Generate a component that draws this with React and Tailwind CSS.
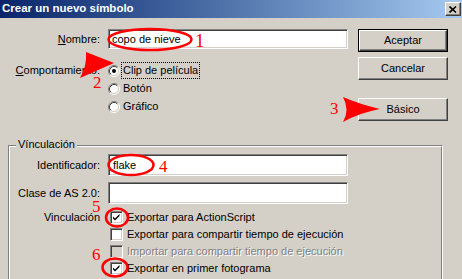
import React from 'react'

const sunken =
  'border border-t-[#808080] border-l-[#808080] border-b-white border-r-white shadow-[inset_1px_1px_0_#404040,inset_-1px_-1px_0_#d4d0c8]'
const raised =
  'border border-t-white border-l-white border-b-[#404040] border-r-[#404040] shadow-[inset_-1px_-1px_0_#808080]'

function Radio({ checked }) {
  return (
    <svg width="12" height="12" viewBox="0 0 12 12" className="shrink-0">
      <circle cx="6" cy="6" r="4.5" fill="#fff" />
      <path d="M9.89 2.11 A5.5 5.5 0 0 0 2.11 9.89" fill="none" stroke="#808080" />
      <path d="M2.11 9.89 A5.5 5.5 0 0 0 9.89 2.11" fill="none" stroke="#fff" />
      <path d="M9.18 2.82 A4.5 4.5 0 0 0 2.82 9.18" fill="none" stroke="#404040" />
      <path d="M2.82 9.18 A4.5 4.5 0 0 0 9.18 2.82" fill="none" stroke="#d4d0c8" />
      {checked && <circle cx="6" cy="6" r="2" fill="#000" />}
    </svg>
  )
}

function Check({ checked, disabled }) {
  return (
    <div className={`${sunken} w-[13px] h-[13px] shrink-0 ${disabled ? 'bg-[#d4d0c8]' : 'bg-white'}`}>
      {checked && (
        <svg width="11" height="11" viewBox="0 0 11 11">
          <path d="M2 4.5 L4 6.5 L8.5 2 L8.5 4 L4 8.5 L2 6.5 Z" fill="#000" />
        </svg>
      )}
    </div>
  )
}

function Button({ children, isDefault }) {
  const inner = (
    <div className={`${raised} flex flex-1 items-center justify-center bg-[#d4d0c8]`}>{children}</div>
  )
  return isDefault ? (
    <div className="flex h-[23px] border border-black">{inner}</div>
  ) : (
    <div className="flex h-[23px]">{inner}</div>
  )
}

export default function App() {
  return (
    <div className="relative w-[462px] h-[279px] overflow-hidden bg-[#d4d0c8] text-[11px] leading-none text-black font-['Liberation_Sans',Arial,sans-serif]">
      {/* Title bar */}
      <div className="flex h-[18px] items-center justify-between bg-linear-to-r from-[#0a246a] to-[#a6caf0] pl-[2px] pr-[1px]">
        <span className="text-[11.5px] font-bold text-white">Crear un nuevo símbolo</span>
        <div className={`${raised} flex h-[14px] w-[16px] items-center justify-center bg-[#d4d0c8]`}>
          <svg width="8" height="7" viewBox="0 0 8 7">
            <path d="M0.5 0.5 L7 6.5 M7 0.5 L0.5 6.5" stroke="#000" strokeWidth="1.6" />
          </svg>
        </div>
      </div>

      {/* Top section */}
      <div className="flex pt-[11px]">
        <div className="grid grid-cols-[100px_240px] items-start gap-x-[8px] gap-y-[7px]">
          <div className="flex h-[20px] items-center justify-end">
            <span>
              <span className="underline">N</span>ombre:
            </span>
          </div>
          <div className={`${sunken} flex h-[20px] items-center bg-white pl-[3px]`}>copo de nieve</div>
          <div className="flex h-[18px] items-center justify-end">
            <span>
              <span className="underline">C</span>omportamiento:
            </span>
          </div>
          <div className="flex flex-col">
            <div className="flex h-[18px] items-center gap-[1px]">
              <Radio checked />
              <span className="border border-dotted border-black px-[1px] py-[2px]">Clip de película</span>
            </div>
            <div className="flex h-[18px] items-center gap-[3px]">
              <Radio />
              <span>Botón</span>
            </div>
            <div className="flex h-[18px] items-center gap-[3px]">
              <Radio />
              <span>Gráfico</span>
            </div>
          </div>
        </div>
        <div className="ml-[10px] flex w-[90px] flex-col">
          <Button isDefault>Aceptar</Button>
          <div className="mt-[5px]">
            <Button>Cancelar</Button>
          </div>
          <div className="mt-[18px]">
            <Button>Básico</Button>
          </div>
        </div>
      </div>

      {/* Vinculación group */}
      <div className="relative mx-[8px] mt-[24px] h-[150px] w-[435px] border border-t-[#808080] border-l-[#808080] border-b-white border-r-white">
        <div className="h-full border border-t-white border-l-white border-b-[#808080] border-r-[#808080] pt-[7px]">
          <div className="grid grid-cols-[90px_240px] gap-x-[8px]">
            <div className="flex h-[22px] items-center justify-end">Identificador:</div>
            <div className={`${sunken} flex h-[22px] items-center bg-white pl-[4px]`}>flake</div>
            <div className="mt-[6px] flex h-[22px] items-center justify-end">Clase de AS 2.0:</div>
            <div className={`${sunken} mt-[6px] h-[22px] bg-white`} />
            <div className="mt-[5px] flex h-[17px] items-center justify-end">Vinculación</div>
            <div className="mt-[5px] flex flex-col pl-[2px]">
              <div className="flex h-[17px] items-center gap-[4px]">
                <Check checked />
                <span>Exportar para ActionScript</span>
              </div>
              <div className="flex h-[17px] items-center gap-[4px]">
                <Check />
                <span>Exportar para compartir tiempo de ejecución</span>
              </div>
              <div className="flex h-[17px] items-center gap-[4px]">
                <Check disabled />
                <span className="text-[#808080] [text-shadow:1px_1px_0_#fff]">
                  Importar para compartir tiempo de ejecución
                </span>
              </div>
              <div className="flex h-[17px] items-center gap-[4px]">
                <Check checked />
                <span>Exportar en primer fotograma</span>
              </div>
            </div>
          </div>
        </div>
        <span className="absolute left-[7px] top-[-7px] bg-[#d4d0c8] px-[2px]">Vínculación</span>
      </div>

      {/* Red annotations */}
      <svg
        className="pointer-events-none absolute left-0 top-0"
        width="462"
        height="279"
        viewBox="0 0 462 279"
      >
        <g fill="none" stroke="#ff0000" strokeWidth="2.5">
          <ellipse cx="150" cy="39.5" rx="41.5" ry="10.5" />
          <ellipse cx="131" cy="165" rx="22.5" ry="10" />
          <ellipse cx="117" cy="217.5" rx="11" ry="9" />
          <ellipse cx="115" cy="267.5" rx="12.5" ry="9" />
        </g>
        <path d="M86 52 L114 63 L80 78 Q87 66 86 52 Z" fill="#ff0000" />
        <path d="M343 97 Q359 104 380 109 Q359 113 343 122 Q350 110 343 97 Z" fill="#ff0000" />
        <g fill="#ff0000" fontFamily="'Liberation Serif', serif">
          <text x="195" y="47" fontSize="19">1</text>
          <text x="93" y="88" fontSize="17">2</text>
          <text x="330" y="114" fontSize="17">3</text>
          <text x="159" y="172" fontSize="17">4</text>
          <text x="92" y="212" fontSize="17">5</text>
          <text x="92" y="260" fontSize="17">6</text>
        </g>
      </svg>
    </div>
  )
}
